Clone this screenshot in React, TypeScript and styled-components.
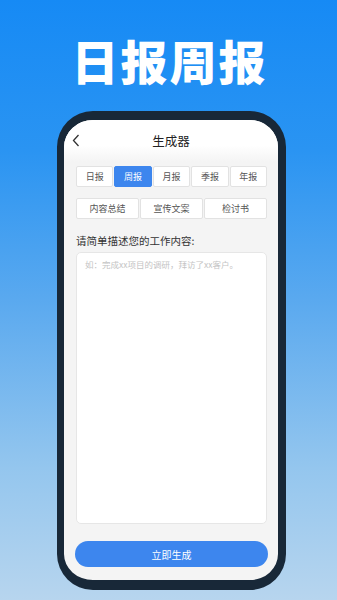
import React from "react";
import styled, { createGlobalStyle } from "styled-components";

const Global = createGlobalStyle`
  html, body { margin: 0; padding: 0; }
  body { font-family: "Noto Sans CJK SC", "Noto Sans", sans-serif; }
`;

const Page = styled.div`
  width: 337px;
  height: 600px;
  overflow: hidden;
  background: linear-gradient(180deg, #168af5 0%, #2a94f2 25%, #5aa9ef 50%, #94c6ee 78%, #b7d5ee 100%);
  display: flex;
  flex-direction: column;
  align-items: center;
`;

const Title = styled.h1`
  margin: 36px 0 0;
  font-size: 47px;
  line-height: 47px;
  font-weight: 900;
  letter-spacing: 2px;
  color: #fff;
  padding-left: 2px;
`;

const Phone = styled.div`
  margin-top: 28px;
  margin-left: 6px;
  width: 214px;
  height: 460px;
  border-style: solid;
  border-color: #182838;
  border-width: 9px 8px 10px 7px;
  border-radius: 36px;
  background: #f4f4f4;
  overflow: hidden;
  display: flex;
  flex-direction: column;
`;

const Header = styled.div`
  height: 42px;
  flex: none;
  display: flex;
  align-items: center;
  justify-content: center;
  position: relative;
  background: linear-gradient(180deg, #ffffff 0%, #ffffff 60%, #f4f4f4 100%);
`;

const HeaderTitle = styled.span`
  font-size: 12.5px;
  color: #222;
  margin-top: -1px;
`;

const Back = styled.svg`
  position: absolute;
  left: 8px;
  top: 14px;
`;

const Body = styled.div`
  flex: 1;
  display: flex;
  flex-direction: column;
  padding: 4px 11px 12px 12px;
`;

const TabRow = styled.div<{ $cols: number }>`
  display: grid;
  grid-template-columns: repeat(${(p) => p.$cols}, 1fr);
  gap: 1px;
  margin-bottom: 11px;
`;

const Tab = styled.div<{ $active?: boolean }>`
  height: 19px;
  display: flex;
  align-items: center;
  justify-content: center;
  font-size: 9px;
  color: ${(p) => (p.$active ? "#fff" : "#555")};
  background: ${(p) => (p.$active ? "#3d86ee" : "#fff")};
  border: 1px solid ${(p) => (p.$active ? "#3d86ee" : "#e2e2e2")};
  border-radius: 2px;
`;

const Label = styled.div`
  margin-top: 4px;
  font-size: 10.5px;
  color: #333;
  line-height: 14px;
`;

const TextBox = styled.div`
  margin-top: 4px;
  height: 272px;
  background: #fff;
  border: 1px solid #e6e6e6;
  border-radius: 5px;
  padding: 5px 8px;
  box-sizing: border-box;
  font-size: 8.5px;
  color: #c4c4c4;
`;

const Button = styled.div`
  margin-top: 17px;
  margin-left: -1px;
  margin-right: -1px;
  height: 26px;
  border-radius: 13px;
  background: #3d86ee;
  color: #fff;
  font-size: 10px;
  display: flex;
  align-items: center;
  justify-content: center;
`;

const tabs1 = ["日报", "周报", "月报", "季报", "年报"];
const tabs2 = ["内容总结", "宣传文案", "检讨书"];

export default function App() {
  return (
    <>
      <Global />
      <Page>
        <Title>日报周报</Title>
        <Phone>
          <Header>
            <Back width="8" height="13" viewBox="0 0 8 13">
              <path d="M6.5 1 L1.5 6.5 L6.5 12" fill="none" stroke="#333" strokeWidth="1.3" />
            </Back>
            <HeaderTitle>生成器</HeaderTitle>
          </Header>
          <Body>
            <TabRow $cols={5}>
              {tabs1.map((t) => (
                <Tab key={t} $active={t === "周报"}>{t}</Tab>
              ))}
            </TabRow>
            <TabRow $cols={3}>
              {tabs2.map((t) => (
                <Tab key={t}>{t}</Tab>
              ))}
            </TabRow>
            <Label>请简单描述您的工作内容:</Label>
            <TextBox>如：完成xx项目的调研，拜访了xx客户。</TextBox>
            <Button>立即生成</Button>
          </Body>
        </Phone>
      </Page>
    </>
  );
}
